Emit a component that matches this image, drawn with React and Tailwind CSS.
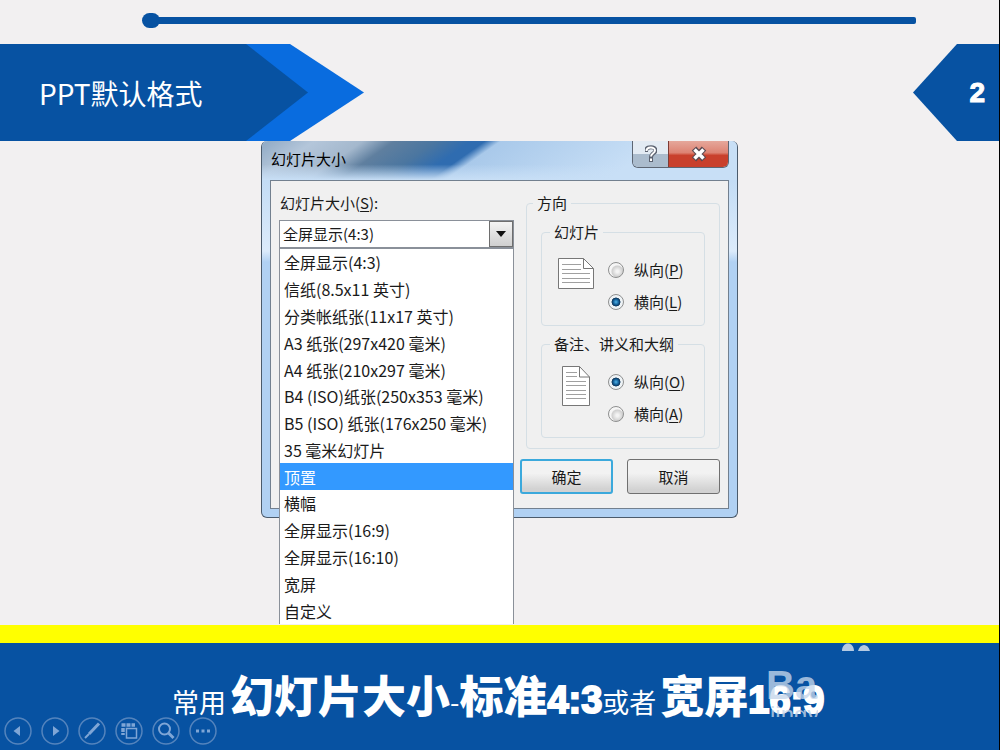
import React, { useState } from 'react';

const sizes = [
  '全屏显示(4:3)',
  '信纸(8.5x11 英寸)',
  '分类帐纸张(11x17 英寸)',
  'A3 纸张(297x420 毫米)',
  'A4 纸张(210x297 毫米)',
  'B4 (ISO)纸张(250x353 毫米)',
  'B5 (ISO) 纸张(176x250 毫米)',
  '35 毫米幻灯片',
  '顶置',
  '横幅',
  '全屏显示(16:9)',
  '全屏显示(16:10)',
  '宽屏',
  '自定义',
];

const LandscapePage = () => (
  <svg width="36" height="31" viewBox="0 0 36 31" className="shrink-0" fill="none">
    <path d="M.5 .5H25.500L35.500 10.500V30.500H.5Z" fill="#fff" stroke="#777" />
    <path d="M25.500 .5V10.500H35.500" stroke="#777" />
    <path d="M4 6.500H23M4 11.500H23M4 15.500H32M4 20.500H32M4 24.500H32" stroke="#a0a0a0" />
  </svg>
);

const PortraitPage = () => (
  <svg width="28" height="40" viewBox="0 0 28 40" className="shrink-0" fill="none">
    <path d="M.5 .5H17.500L27.500 11V39.500H.5Z" fill="#fff" stroke="#777" />
    <path d="M17.500 .5V11H27.500" stroke="#777" />
    <path d="M4 6.500H15M4 10.500H15M4 15.500H24M4 19.500H24M4 24.500H24M4 28.500H24M4 32.500H24" stroke="#a0a0a0" />
  </svg>
);

const Radio = ({ name, value, current, onChange, hotkey, children }) => (
  <label className="flex items-center gap-[10px] h-8">
    <input
      type="radio"
      name={name}
      value={value}
      checked={current === value}
      onChange={() => onChange(value)}
      className="appearance-none w-4 h-4 rounded-full border border-[#8e8f8f] bg-[radial-gradient(circle_at_60%_60%,#f4f4f4_10%,#cfcfcf_45%,#f6f6f6_55%)] checked:bg-[radial-gradient(circle_at_50%_50%,#4fb4e8_0,#17659f_25%,#0b3358_42%,#eef3f6_48%)]"
    />
    <span>
      {children}(<u className="underline-offset-2">{hotkey}</u>)
    </span>
  </label>
);

const NavButton = ({ label, children }) => (
  <button aria-label={label} className="w-7 h-7">
    <svg width="28" height="28" viewBox="0 0 28 28" fill="none" stroke="#5484bd" strokeWidth="1.500">
      <circle cx="14" cy="14" r="13" />
      {children}
    </svg>
  </button>
);

const App = () => {
  const [size, setSize] = useState('全屏显示(4:3)');
  const [slides, setSlides] = useState('landscape');
  const [notes, setNotes] = useState('portrait');

  return (
    <div className="min-h-screen flex flex-col bg-[#f2f0f1] border-r border-black font-['Noto_Sans_CJK_SC',sans-serif] text-[15px] leading-5 text-[#1a1a1a]">
      <div className="flex items-center h-11 pb-1 pl-[142px] pr-[83px]">
        <div className="w-[18px] h-[15px] rounded-full bg-[#0752a2]" />
        <div className="flex-1 h-[7px] -ml-1 rounded-xs bg-[#0752a2]" />
      </div>

      <header className="flex justify-between h-[97px] text-white">
        <div className="w-[364px] bg-[#096cdf] [clip-path:polygon(0_0,290px_0,100%_50%,290px_100%,0_100%)]">
          <h1 className="flex items-center w-[308px] h-full pl-[39px] bg-[#0752a2] text-[28px] [clip-path:polygon(0_0,246px_0,100%_50%,246px_100%,0_100%)]">
            PPT默认格式
          </h1>
        </div>
        <div className="flex items-center justify-end w-[86px] pr-[14px] bg-[#0752a2] font-['Liberation_Sans',sans-serif] text-[28px] font-black [-webkit-text-stroke:1px] [clip-path:polygon(44px_0,100%_0,100%_100%,44px_100%,0_50%)]">
          2
        </div>
      </header>

      <main className="w-[477px] mx-auto">
        <div className="rounded-md border border-t-0 border-[#4b5b6c] bg-[linear-gradient(to_bottom,#c3dcf5_40px,#dcebfb_110px,#b1d1f3_121px,#b1d1f3)] px-2 pb-2">
          <div className="flex justify-between h-[39px] -mx-2 px-2 rounded-t-md bg-[linear-gradient(to_bottom,transparent_60%,#c8dff6_100%),linear-gradient(145deg,#8fa9c4_0,#b4c6da_30px,#a4b8cd_58px,#5f7f9f_76px,#4b76a0_100px,#2f6cb0_120px,#2f6cb0_128px,#a9c9ea_137px,#c8dff6_230px)]">
            <h2 className="pt-2 pl-px text-black">幻灯片大小</h2>
            <div className="flex h-[27px] rounded-b-md border border-t-0 border-[#5d6673] overflow-hidden">
              <button aria-label="帮助" className="flex items-center justify-center w-[35px] bg-linear-to-b from-[#e3ebf3] from-50% to-[#abbccd] to-50%">
                <svg width="12" height="18" viewBox="0 0 12 18" fill="none">
                  <path d="M1 7V5.500C1.500 1 10.500 1 10.500 5.500C10.500 8.500 6 8 6 12.500M6 12.500V17" stroke="#5b6270" strokeWidth="4" />
                  <path d="M1.500 6C1.500 1.500 10 1.500 10 5.500C10 8.500 6 8 6 11.500M6 13.500V16" stroke="#fff" strokeWidth="2" />
                </svg>
              </button>
              <button aria-label="关闭" className="flex items-center justify-center w-[60px] border-l border-[#7c3b35] bg-linear-to-b from-[#e5a79b] from-0% via-[#dd8373] via-45% to-[#c9402c] to-55%">
                <svg width="16" height="16" viewBox="0 0 16 16">
                  <path d="M3 2.500L13 13.500M13 2.500L3 13.500" stroke="#5a4a52" strokeWidth="6" />
                  <path d="M3.500 3.500L12.500 12.500M12.500 3.500L3.500 12.500" stroke="#fff" strokeWidth="3.500" />
                </svg>
              </button>
            </div>
          </div>

          <div className="flex justify-between border border-[#72808f] bg-[#f0f0f0] px-2 pt-3 pb-[14px]">
            <div className="w-[236px]">
              <label htmlFor="size" className="pl-px">
                幻灯片大小(<u className="underline-offset-2">S</u>):
              </label>
              <div className="relative mt-[7px] mr-px">
                <select
                  id="size"
                  value={size}
                  onChange={(e) => setSize(e.target.value)}
                  className="appearance-none block w-full h-7 pl-[3px] border border-[#8a9099] bg-white"
                >
                  {sizes.map((s) => (
                    <option key={s}>{s}</option>
                  ))}
                </select>
                <span className="pointer-events-none absolute right-px top-px flex items-center justify-center w-6 h-[26px] border border-[#6e6e6e] bg-linear-to-b from-[#f4f4f4] to-[#cfcfcf]">
                  <svg width="10" height="6" viewBox="0 0 10 6">
                    <path d="M0 0H10L5 6Z" fill="#111" />
                  </svg>
                </span>
                <ul className="absolute z-10 top-7 left-0 w-full h-[376px] grid auto-rows-fr border border-b-0 border-[#8a9099] bg-white text-[16px]">
                  {sizes.map((s) => (
                    <li
                      key={s}
                      onClick={() => setSize(s)}
                      className={`flex items-center pl-1 ${s === '顶置' ? 'bg-[#3399ff] text-white' : ''}`}
                    >
                      {s}
                    </li>
                  ))}
                </ul>
              </div>
            </div>

            <div className="w-[200px]">
              <fieldset className="ml-[6px] rounded border border-[#d5dfe5] px-[14px] pb-[10px]">
                <legend className="-ml-2 px-1">方向</legend>
                <fieldset className="h-[104px] rounded border border-[#d5dfe5] mt-[9px] pl-4">
                  <legend className="-ml-2 px-1">幻灯片</legend>
                  <div className="flex gap-[14px] pt-4">
                    <div>
                      <LandscapePage />
                    </div>
                    <div className="-mt-1">
                      <Radio name="slides" value="portrait" current={slides} onChange={setSlides} hotkey="P">纵向</Radio>
                      <Radio name="slides" value="landscape" current={slides} onChange={setSlides} hotkey="L">横向</Radio>
                    </div>
                  </div>
                </fieldset>
                <fieldset className="h-[104px] rounded border border-[#d5dfe5] mt-2 pl-4">
                  <legend className="-ml-2 px-1">备注、讲义和大纲</legend>
                  <div className="flex gap-[18px] pl-1 pt-4">
                    <div className="-mt-1">
                      <PortraitPage />
                    </div>
                    <div className="-mt-1">
                      <Radio name="notes" value="portrait" current={notes} onChange={setNotes} hotkey="O">纵向</Radio>
                      <Radio name="notes" value="landscape" current={notes} onChange={setNotes} hotkey="A">横向</Radio>
                    </div>
                  </div>
                </fieldset>
              </fieldset>
              <div className="flex justify-between mt-[10px]">
                <button className="w-[93px] h-[35px] rounded-[3px] border-2 border-[#3ba9dc] bg-linear-to-b from-[#f2f2f2] from-40% to-[#d2d2d2] to-90%">确定</button>
                <button className="w-[93px] h-[35px] rounded-[3px] border border-[#707070] bg-linear-to-b from-[#f2f2f2] from-40% to-[#d2d2d2] to-90%">取消</button>
              </div>
            </div>
          </div>
        </div>
      </main>

      <footer className="relative mt-auto border-t-[18px] border-[#ffff00] bg-[#0752a2] text-white pb-[5px]">
        <p className="flex items-baseline pl-[172px] h-[74px] pt-[21px] text-[27px] leading-[60px] whitespace-nowrap">
          常用
          <strong className="ml-1 text-[44px] font-black">幻灯片大小</strong>
          -
          <strong className="text-[44px] font-black">标准</strong>
          <strong className="font-['Liberation_Sans',sans-serif] text-[38px] font-black [-webkit-text-stroke:2px]">4:3</strong>
          或者
          <strong className="ml-1 text-[44px] font-black">宽屏</strong>
          <strong className="font-['Liberation_Sans',sans-serif] text-[38px] font-black [-webkit-text-stroke:2px]">16:9</strong>
        </p>
        <nav className="flex gap-[9px] pl-1">
          <NavButton label="上一张">
            <path d="M9.500 14L16 9V19Z" fill="#7fa6d6" stroke="none" />
          </NavButton>
          <NavButton label="下一张">
            <path d="M18.500 14L12 9V19Z" fill="#7fa6d6" stroke="none" />
          </NavButton>
          <NavButton label="笔">
            <path d="M21 6.500L11 17" stroke="#7fa6d6" strokeWidth="3" />
            <path d="M11 17L7 21" stroke="#7fa6d6" strokeWidth="2" />
          </NavButton>
          <NavButton label="所有幻灯片">
            <path d="M6.500 8H20M8 11V18" stroke="#7fa6d6" strokeWidth="3.500" strokeDasharray="4 1" />
            <rect x="11.500" y="11.500" width="10" height="9.500" fill="#0752a2" stroke="#7fa6d6" />
          </NavButton>
          <NavButton label="放大">
            <circle cx="12.500" cy="12" r="5.500" stroke="#7fa6d6" strokeWidth="2" />
            <path d="M16.500 16L21.500 21" stroke="#7fa6d6" strokeWidth="3" />
          </NavButton>
          <NavButton label="更多">
            <path d="M7 14H10M12.500 14H15.500M18 14H21" stroke="#7fa6d6" strokeWidth="3" />
          </NavButton>
        </nav>
        {/* half-faded site mark over the caption */}
        <div className="absolute left-[766px] top-[22px] w-[52px] h-[52px] overflow-hidden font-['Liberation_Sans',sans-serif] font-bold text-[#c5d6ea]/80">
          <div className="text-[40px] leading-10">Bai</div>
          <div className="pl-1 text-[24px] leading-5 font-normal">jingyan</div>
        </div>
        <svg className="absolute left-[842px] top-0" width="28" height="8" viewBox="0 0 28 8" fill="#b5cae2">
          <path d="M0 8C0 -2 12 -2 12 8ZM16 8C18 0 26 0 28 8Z" />
        </svg>
      </footer>
    </div>
  );
};

export default App;
